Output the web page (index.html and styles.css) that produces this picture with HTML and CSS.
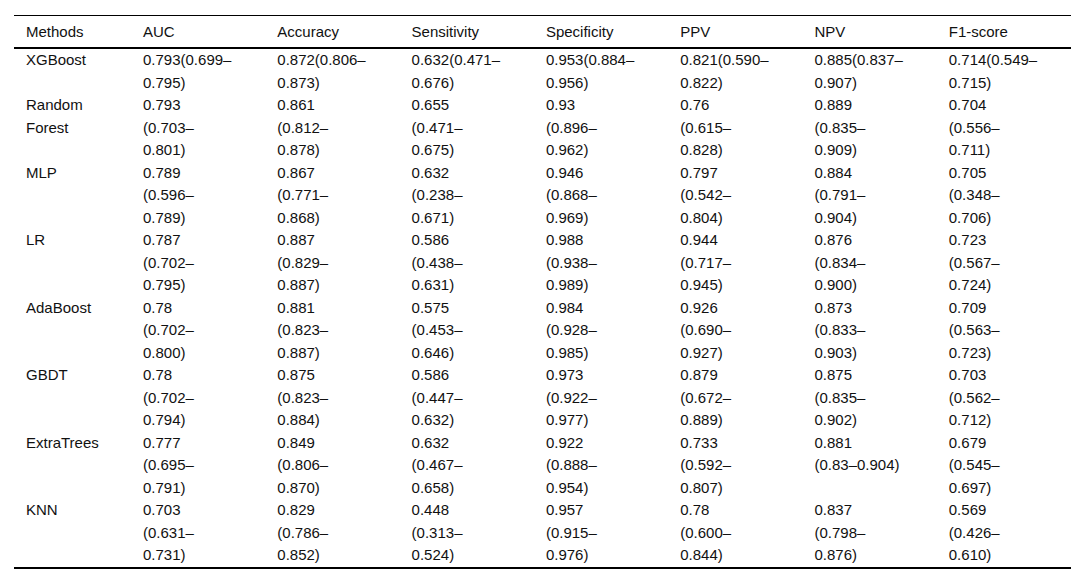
FILE: index.html
```html
<!DOCTYPE html>
<html lang="en">
<head>
<meta charset="utf-8">
<title>Model performance</title>
<link rel="stylesheet" href="styles.css">
</head>
<body>
<div class="wrap">
<table class="results">
<colgroup>
<col class="c-method">
<col class="c-metric"><col class="c-metric"><col class="c-metric"><col class="c-metric">
<col class="c-metric"><col class="c-metric"><col class="c-metric">
</colgroup>
<thead>
<tr><th>Methods</th><th>AUC</th><th>Accuracy</th><th>Sensitivity</th><th>Specificity</th><th>PPV</th><th>NPV</th><th>F1-score</th></tr>
</thead>
<tbody>
<tr><td>XGBoost</td><td>0.793(0.699–<br>0.795)</td><td>0.872(0.806–<br>0.873)</td><td>0.632(0.471–<br>0.676)</td><td>0.953(0.884–<br>0.956)</td><td>0.821(0.590–<br>0.822)</td><td>0.885(0.837–<br>0.907)</td><td>0.714(0.549–<br>0.715)</td></tr>
<tr><td>Random<br>Forest</td><td>0.793<br>(0.703–<br>0.801)</td><td>0.861<br>(0.812–<br>0.878)</td><td>0.655<br>(0.471–<br>0.675)</td><td>0.93<br>(0.896–<br>0.962)</td><td>0.76<br>(0.615–<br>0.828)</td><td>0.889<br>(0.835–<br>0.909)</td><td>0.704<br>(0.556–<br>0.711)</td></tr>
<tr><td>MLP</td><td>0.789<br>(0.596–<br>0.789)</td><td>0.867<br>(0.771–<br>0.868)</td><td>0.632<br>(0.238–<br>0.671)</td><td>0.946<br>(0.868–<br>0.969)</td><td>0.797<br>(0.542–<br>0.804)</td><td>0.884<br>(0.791–<br>0.904)</td><td>0.705<br>(0.348–<br>0.706)</td></tr>
<tr><td>LR</td><td>0.787<br>(0.702–<br>0.795)</td><td>0.887<br>(0.829–<br>0.887)</td><td>0.586<br>(0.438–<br>0.631)</td><td>0.988<br>(0.938–<br>0.989)</td><td>0.944<br>(0.717–<br>0.945)</td><td>0.876<br>(0.834–<br>0.900)</td><td>0.723<br>(0.567–<br>0.724)</td></tr>
<tr><td>AdaBoost</td><td>0.78<br>(0.702–<br>0.800)</td><td>0.881<br>(0.823–<br>0.887)</td><td>0.575<br>(0.453–<br>0.646)</td><td>0.984<br>(0.928–<br>0.985)</td><td>0.926<br>(0.690–<br>0.927)</td><td>0.873<br>(0.833–<br>0.903)</td><td>0.709<br>(0.563–<br>0.723)</td></tr>
<tr><td>GBDT</td><td>0.78<br>(0.702–<br>0.794)</td><td>0.875<br>(0.823–<br>0.884)</td><td>0.586<br>(0.447–<br>0.632)</td><td>0.973<br>(0.922–<br>0.977)</td><td>0.879<br>(0.672–<br>0.889)</td><td>0.875<br>(0.835–<br>0.902)</td><td>0.703<br>(0.562–<br>0.712)</td></tr>
<tr><td>ExtraTrees</td><td>0.777<br>(0.695–<br>0.791)</td><td>0.849<br>(0.806–<br>0.870)</td><td>0.632<br>(0.467–<br>0.658)</td><td>0.922<br>(0.888–<br>0.954)</td><td>0.733<br>(0.592–<br>0.807)</td><td>0.881<br>(0.83–0.904)</td><td>0.679<br>(0.545–<br>0.697)</td></tr>
<tr><td>KNN</td><td>0.703<br>(0.631–<br>0.731)</td><td>0.829<br>(0.786–<br>0.852)</td><td>0.448<br>(0.313–<br>0.524)</td><td>0.957<br>(0.915–<br>0.976)</td><td>0.78<br>(0.600–<br>0.844)</td><td>0.837<br>(0.798–<br>0.876)</td><td>0.569<br>(0.426–<br>0.610)</td></tr>
</tbody>
</table>
</div>
</body>
</html>
```

FILE: styles.css
```css
html, body {
  margin: 0;
  padding: 0;
  background: #fff;
}

body {
  font-family: "Liberation Sans", Arial, Helvetica, sans-serif;
  font-size: 15px;
  color: #111;
}

.wrap {
  padding: 15px 0 0 14px;
}

.results {
  width: 1057px;
  table-layout: fixed;
  border-collapse: separate;
  border-spacing: 0;
}

.c-method {
  width: 117px;
}

.c-metric {
  width: 134.3px;
}

.results th {
  text-align: left;
  font-weight: normal;
  line-height: 22px;
  padding: 5px 0 4px 12px;
  border-top: 1px solid #000;
  border-bottom: 2px solid #000;
  white-space: nowrap;
}

.results td {
  text-align: left;
  vertical-align: top;
  line-height: 22.5px;
  padding: 0 0 0 12px;
  white-space: nowrap;
}

.results tbody tr:last-child td {
  border-bottom: 2px solid #000;
}
```
